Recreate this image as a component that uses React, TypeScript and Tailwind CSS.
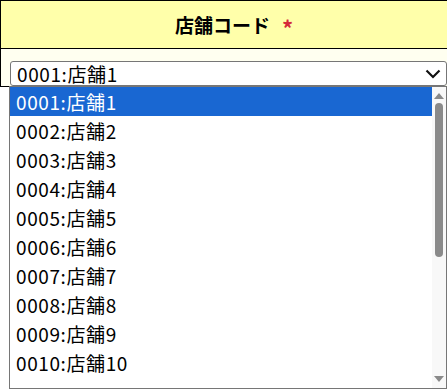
import React from "react";

const items = Array.from({ length: 10 }, (_, i) => {
  const n = i + 1;
  return `${String(n).padStart(4, "0")}:店舗${n}`;
});

export default function App() {
  return (
    <div
      className="relative w-[447px] h-[389px] overflow-hidden bg-white text-black"
      style={{ fontFamily: '"Noto Sans CJK JP", "Noto Sans", sans-serif' }}
    >
      <div className="h-[49px] bg-[#ffffaa] border-l border-t border-b border-black flex items-center justify-center pl-[20px]">
        <span className="text-[19px] font-bold leading-none">店舗コード</span>
        <span className="ml-[12px] text-[22px] font-bold leading-none text-[#d42a3a] mt-[4px]">*</span>
      </div>
      <div className="h-[38px] bg-[#fffff0] border-l border-b border-black pl-[9px] pt-[12px]">
        <div className="h-[25px] bg-white border border-[#767676] rounded-[3px] flex items-center pl-[6px] pr-[5px]">
          <span className="flex-1 text-[19px] leading-none tracking-[0.6px]">0001:店舗1</span>
          <svg width="16" height="10" viewBox="0 0 16 10" className="shrink-0">
            <path d="M1.5 1.5 L8 8 L14.5 1.5" fill="none" stroke="#111" strokeWidth="2.2" />
          </svg>
        </div>
      </div>
      <div className="absolute left-[9px] top-[86px] w-[438px] h-[303px] bg-white border border-[#767676] flex overflow-hidden">
        <div className="flex-1 flex flex-col">
          {items.map((t, i) => (
            <div
              key={t}
              className={`h-[29px] shrink-0 flex items-center pl-[6px] text-[19px] leading-none tracking-[0.6px] ${
                i === 0 ? "bg-[#1967d2] text-white" : ""
              }`}
            >
              {t}
            </div>
          ))}
        </div>
        <div className="w-[14px] shrink-0 bg-[#f8f8f8] flex flex-col items-center">
          <svg width="10" height="7" viewBox="0 0 10 7" className="mt-[5px]">
            <path d="M0 7 L5 1 L10 7 Z" fill="#8a8a8a" />
          </svg>
          <div className="mt-[4px] w-[8px] h-[154px] rounded-full bg-[#8a8a8a]" />
          <div className="flex-1" />
          <svg width="10" height="7" viewBox="0 0 10 7" className="mb-[5px]">
            <path d="M0 0 L10 0 L5 6 Z" fill="#8a8a8a" />
          </svg>
        </div>
      </div>
    </div>
  );
}
